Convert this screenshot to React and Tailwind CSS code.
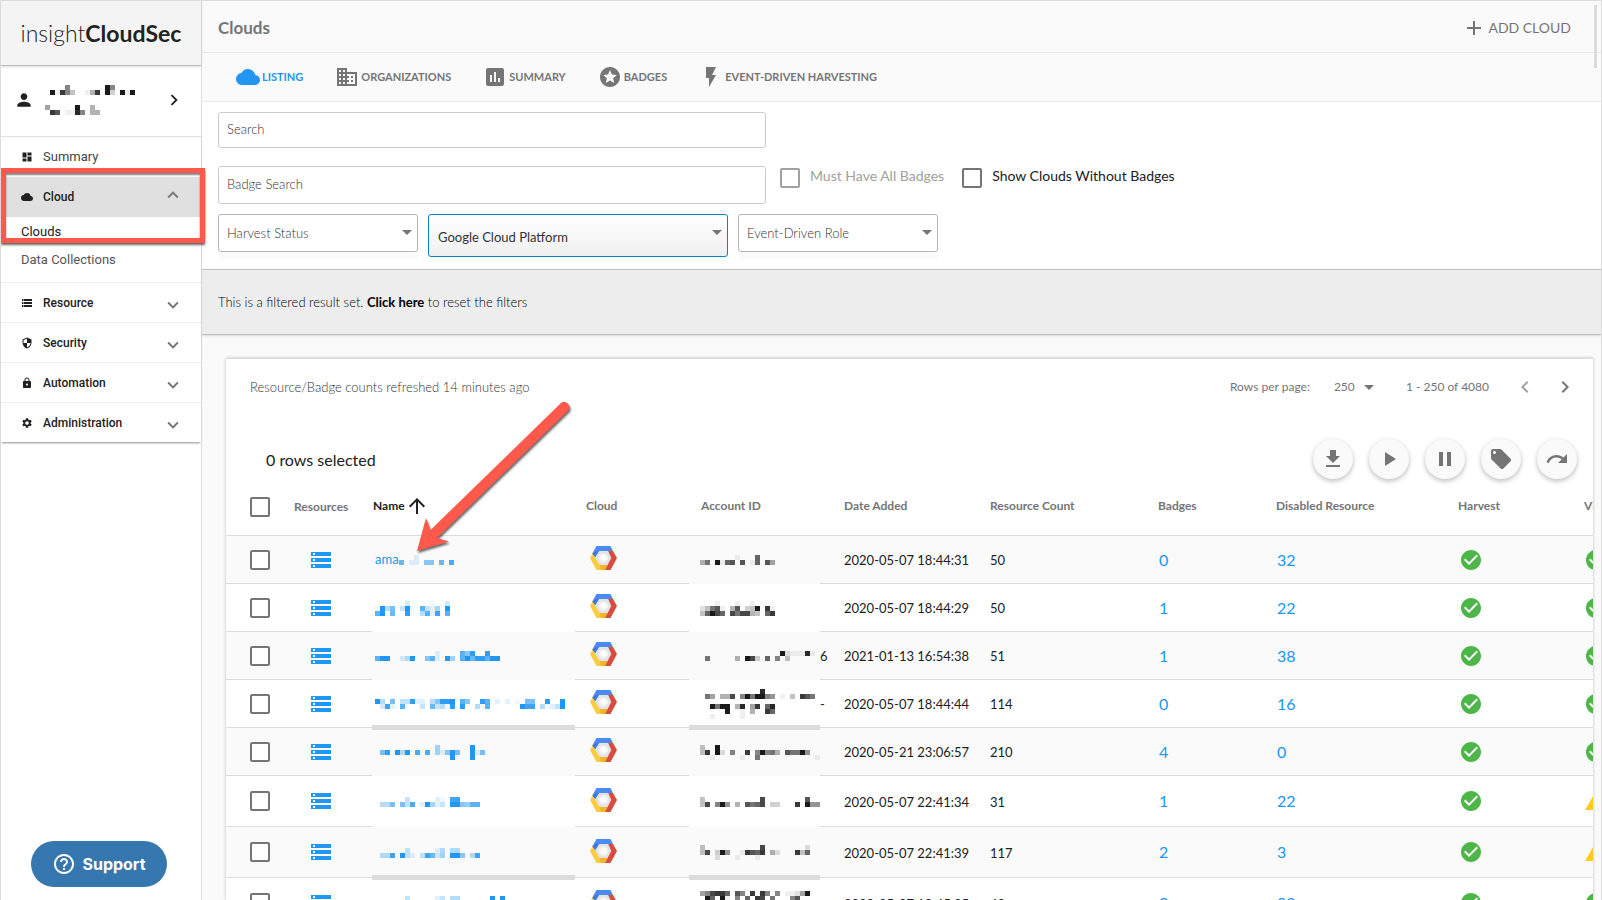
import React from "react";
import {
  MdAdd, MdArrowUpward, MdAssessment, MdBusiness, MdCheckCircle, MdChevronLeft, MdChevronRight,
  MdCloud, MdDashboard, MdFlashOn, MdGetApp, MdHelpOutline, MdKeyboardArrowDown, MdKeyboardArrowUp,
  MdLocalOffer, MdLock, MdPause, MdPerson, MdPlayArrow, MdRedo, MdSecurity, MdSettings, MdStars,
  MdStorage, MdWarning,
} from "react-icons/md";

const CELL = 5;

/* Redacted text: each character of a line is one cell, its hex value the cell's strength. */
function Mosaic({ lines, color }) {
  const cols = Math.max(...lines.map((l) => l.length));
  return (
    <svg
      width={cols * CELL}
      height={lines.length * CELL}
      className="inline-block shrink-0"
      shapeRendering="crispEdges"
      aria-hidden="true"
    >
      {lines.flatMap((line, y) =>
        [...line].map((ch, x) =>
          ch === "." ? null : (
            <rect
              key={x + "-" + y}
              x={x * CELL}
              y={y * CELL}
              width={CELL}
              height={CELL}
              fill={color}
              fillOpacity={parseInt(ch, 16) / 15}
            />
          )
        )
      )}
    </svg>
  );
}

function GcpLogo() {
  return (
    <svg width="27" height="24" viewBox="0 0 27 24" className="block" role="img" aria-label="Google Cloud Platform">
      <path d="M9 4.5h9.500l3.500 7.500-3.500 7.500h-9L5 12z" fill="#e2e2e4" />
      <circle cx="13.500" cy="12" r="5" fill="#f0f0f1" />
      <circle cx="13.500" cy="12" r="3" fill="#fff" />
      <path d="M6.500 0h14L23 5H9L5 11.300 2.300 7.600z" fill="#4a8af4" />
      <path d="M9 5L5 11.300 2.300 7.600 6 5z" fill="#3f78dd" />
      <path d="M2.300 7.600L5 11.300 9.500 19h8L15 24H6.500L0 12z" fill="#fdcb3f" />
      <path d="M9.500 19h8L15 24h-4z" fill="#efb52d" />
      <path d="M18.200 5H23l4 7-6.500 12H15l6.300-12z" fill="#d94b3d" />
    </svg>
  );
}

const ROWS = [
  {
    lead: "ama", name: ["...2", "a.22.88.a.c"],
    account: [".......1...a", "59.f1ab.b.1a.b6"],
    date: "2020-05-07 18:44:31", count: 50, badges: 0, disabled: 32, ok: true, nameLine: true,
  },
  {
    name: ["......3....1..3", "1f59.4f1.b426.f", "bf.a..e1.5b2d.b"],
    account: ["...1...1..1", "249b1.5b.34f.d1", "4afca.c9cc54.ad"],
    date: "2020-05-07 18:44:29", count: 50, badges: 1, disabled: 22, ok: true,
  },
  {
    name: ["............2....b8e..e", "bff..35f..8b2.f6.bfaeebff"],
    account: ["................f2111e1.", ".9.....5.fc3.a.8.4"], tail: "6",
    date: "2021-01-13 16:54:38", count: 51, badges: 1, disabled: 38, ok: true,
  },
  {
    name: ["f5.9.44e22.58eef.b8..eb.2.2.1.99..e..f", ".3d2.b...4.a451e.e..51b......fdd.5124f"],
    account: ["............e", ".96.55c.8f9ff87.1.4.db9.", "", "..f9ff.5e.6d.ae", ".....f..1.5..da", "..1.....1"], tail: "-",
    date: "2020-05-07 18:44:44", count: 114, badges: 0, disabled: 16, ok: true, bar: true,
  },
  {
    name: ["............6......f", ".9e.f5f.c.c.628f9..f29", "...............f...f"],
    account: ["4..f", "4d.f2.8..d.8f895.b99f7", "..1.....1..9...........1"],
    date: "2020-05-21 23:06:57", count: 210, badges: 4, disabled: 0, ok: true,
  },
  {
    name: ["......4.....21.dd", ".559.94c.2f624.ff87bb"],
    account: ["4...........c........b", "4c.8f7.5.b9ac.33...d.f77"],
    date: "2020-05-07 22:41:34", count: 31, badges: 1, disabled: 22, ok: false, tall: true,
  },
  {
    name: ["......4.....25.55", ".55d.f42.4da36.ff8.5d"],
    account: ["4...........c........2", "4c.3f7..1dbad.52...d4a", "...2...1...1"],
    date: "2020-05-07 22:41:39", count: 117, badges: 2, disabled: 3, ok: false, tall: true, bar: true,
  },
  {
    name: ["......4.....24.55......f.f", ".55d.f42.4da36.ff8.5d..f.f", "......1.....1.........."],
    account: ["68cdda.b8.d.d8.8.1126f", ".fa.f1.8.a.dc.9...8b", "4c.8f7.5.b9ac.33", "4c.3f7..1dbad.52", "..1.....1"],
    date: "2020-05-07 18:45:05", count: 40, badges: 0, disabled: 22, ok: true, tall: true,
  },
];

const TABS = [
  { label: "LISTING", icon: MdCloud, active: true },
  { label: "ORGANIZATIONS", icon: MdBusiness },
  { label: "SUMMARY", icon: MdAssessment },
  { label: "BADGES", icon: MdStars },
  { label: "EVENT-DRIVEN HARVESTING", icon: MdFlashOn },
];

const SECTIONS = [
  { label: "Resource", icon: MdStorage },
  { label: "Security", icon: MdSecurity },
  { label: "Automation", icon: MdLock },
  { label: "Administration", icon: MdSettings },
];

const ACTIONS = [
  { label: "Download", icon: MdGetApp },
  { label: "Resume", icon: MdPlayArrow },
  { label: "Pause", icon: MdPause },
  { label: "Tag", icon: MdLocalOffer },
  { label: "Redo", icon: MdRedo },
];

function Check({ label, disabled }) {
  return (
    <input
      type="checkbox"
      aria-label={label}
      disabled={disabled}
      className="block size-5 shrink-0 appearance-none rounded-[2px] border-2 border-[#757575] bg-white disabled:border-[#a0a0a0]"
    />
  );
}

function Caret() {
  return (
    <svg width="10" height="5" viewBox="0 0 10 5" className="pointer-events-none absolute top-4 right-1.5 fill-[#757575]" aria-hidden="true">
      <path d="M0 0h10L5 5z" />
    </svg>
  );
}

function Picker({ label }) {
  return (
    <div className="relative h-[38px] w-[200px]">
      <select
        aria-label={label}
        className="h-full w-full appearance-none rounded-[3px] border border-[#b4b4b4] bg-white pl-2 text-[13px] font-light text-[#333] shadow-[0_7px_0_0_#fafafa]"
      >
        <option>{label}</option>
      </select>
      <Caret />
    </div>
  );
}

function Sidebar() {
  return (
    <aside className="relative w-[201px] shrink-0 border-r border-[#dcdcdc] bg-white font-[Roboto,sans-serif] text-[13px] text-[#212121]">
      <div className="flex h-[65px] items-center justify-center border-b border-[#bdbdbd] bg-[#f4f4f4] font-[Lato,sans-serif] text-[23px] text-[#222] shadow-sm">
        <span className="font-light">insight</span>
        <span className="font-bold">CloudSec</span>
      </div>
      <button type="button" aria-label="Account" className="flex h-[71px] w-full items-center border-b border-[#e0e0e0] pr-4 pb-0.5 pl-[13px]">
        <MdPerson size={20} />
        <span className="flex flex-1 flex-col gap-[10px] pl-[11px]">
          <Mosaic color="#1a1a1a" lines={["....8.......f8", ".f1d84..15d.f3.f1f"]} />
          <Mosaic color="#1a1a1a" lines={["6.....f..5", ".db.11e8.55"]} />
        </span>
        <MdChevronRight size={22} />
      </button>
      <nav className="shadow-[0_2px_2px_-1px_rgba(0,0,0,0.45)]">
        <a href="#summary" className="flex h-10 items-center gap-[10px] pl-5 text-[#444]">
          <MdDashboard size={12} className="text-[#212121]" />
          Summary
        </a>
        <button type="button" className="flex h-10 w-full items-center gap-[10px] bg-[#e0e0e0] pr-[17px] pl-5 text-xs font-medium">
          <MdCloud size={12} />
          <span className="flex-1 text-left">Cloud</span>
          <MdKeyboardArrowUp size={22} className="mb-1 text-[#757575]" />
        </button>
        <div className="flex h-[65px] flex-col gap-2 pt-[5px]">
          <a href="#clouds" className="pl-5 leading-5">Clouds</a>
          <a href="#data" className="pl-5 leading-5 text-[#555]">Data Collections</a>
        </div>
        {SECTIONS.map(({ label, icon: Icon }) => (
          <button key={label} type="button" className="flex h-10 w-full items-center gap-[10px] border-t border-[#f0f0f0] pr-[17px] pl-5 text-xs font-medium">
            <Icon size={12} />
            <span className="flex-1 text-left">{label}</span>
            <MdKeyboardArrowDown size={22} className="mt-[5px] text-[#757575]" />
          </button>
        ))}
      </nav>
      <div className="pointer-events-none absolute top-[167px] left-0 h-[75px] w-[204px] border-[5px] border-[#ff594c] shadow-[0_2px_2px_rgba(0,0,0,0.6),inset_0_2px_2px_rgba(0,0,0,0.5)]" />
    </aside>
  );
}

function Filters() {
  return (
    <section className="bg-white px-4 pt-[10px] pb-3">
      <input
        type="text"
        aria-label="Search"
        placeholder="Search"
        className="block h-9 w-[548px] rounded-[3px] border border-[#ccc] px-2 pb-0.5 text-[13px] font-light placeholder:text-[#333]"
      />
      <div className="mt-[18px] flex items-start">
        <input
          type="text"
          aria-label="Badge Search"
          placeholder="Badge Search"
          className="block h-[38px] w-[548px] rounded-[3px] border border-[#ccc] px-2 pb-0.5 text-[13px] font-light placeholder:text-[#333]"
        />
        <label className="mt-0.5 ml-[14px] flex items-start gap-[10px] text-sm leading-4 text-[#a0a0a0]">
          <Check disabled />
          Must Have All Badges
        </label>
        <label className="mt-0.5 ml-[18px] flex items-start gap-[10px] text-sm leading-4 text-[#212121]">
          <Check />
          Show Clouds Without Badges
        </label>
      </div>
      <div className="mt-[10px] flex items-start gap-[10px]">
        <Picker label="Harvest Status" />
        <div className="relative h-[43px] w-[300px]">
          <select
            aria-label="Cloud type"
            className="h-full w-full appearance-none rounded-[3px] border border-[#0a84c1] bg-linear-to-b from-white to-[#f0f0f0] pt-1 pl-[9px] text-[13px] text-[#333]"
          >
            <option>Google Cloud Platform</option>
          </select>
          <Caret />
        </div>
        <Picker label="Event-Driven Role" />
      </div>
    </section>
  );
}

function CloudTable() {
  const head = "p-0 text-xs font-bold text-[#757575] border-b border-[#dcdcdc] text-left";
  const label = head + " pb-0.5";
  const line = "border-b border-[#dcdcdc]";
  return (
    <table className="w-full min-w-[1414px] table-fixed border-separate border-spacing-0 whitespace-nowrap">
      <colgroup>
        <col className="w-[60px]" />
        <col className="w-[86px]" />
        <col className="w-[203px]" />
        <col className="w-[114px]" />
        <col className="w-[131px]" />
        <col className="w-[146px]" />
        <col className="w-[168px]" />
        <col className="w-[118px]" />
        <col className="w-[182px]" />
        <col className="w-[126px]" />
        <col className="w-[80px]" />
      </colgroup>
      <thead>
        <tr className="h-[57px]">
          <th className={head + " pl-6"}><Check label="Select all rows" /></th>
          <th className={head + " pl-2"}>Resources</th>
          <th className={label + " pl-px"}>
            <button type="button" className="flex items-center font-bold text-[#212121]">
              Name
              <MdArrowUpward size={24} />
            </button>
          </th>
          <th className={label + " pl-[11px]"}>Cloud</th>
          <th className={label + " pl-3"}>Account ID</th>
          <th className={label + " pl-6"}>Date Added</th>
          <th className={label + " pl-6"}>Resource Count</th>
          <th className={label + " pl-6"}>Badges</th>
          <th className={label + " pl-6"}>Disabled Resource</th>
          <th className={label + " pl-6"}>Harvest</th>
          <th className={label + " pl-6"}>Visibility</th>
        </tr>
      </thead>
      <tbody className="text-[13px] text-[#212121]">
        {ROWS.map((r) => (
          <tr key={r.date} className={(r.tall ? "h-[51px]" : "h-12") + " odd:bg-[#fafafa] even:bg-white"}>
            <td className={line + " p-0 pl-6"}><Check label={"Select row " + r.date} /></td>
            <td className={line + " p-0 pr-4"}>
              <a href="#resources" aria-label="Resources" className="flex justify-center text-[#2196f3]"><MdStorage size={24} /></a>
            </td>
            <td className={(r.nameLine ? line : "") + " relative p-0 pl-[3px]"}>
              <a href="#cloud" aria-label="Open cloud" className="flex items-center text-[#2196f3]">
                {r.lead}
                <Mosaic lines={r.name} color="#2196f3" />
              </a>
              {r.bar && <div className="absolute inset-x-0 -bottom-0.5 z-10 h-[5px] bg-[#dcdcdc]" />}
            </td>
            <td className={line + " p-0 pb-[3px] pl-[15px]"}><GcpLogo /></td>
            <td className="relative p-0 pl-[11px]">
              <div className="flex items-center">
                <Mosaic lines={r.account} color="#1a1a1a" />
                {r.tail}
              </div>
              {r.bar && <div className="absolute inset-x-0 -bottom-0.5 z-10 h-[5px] bg-[#dcdcdc]" />}
            </td>
            <td className={line + " p-0 pt-0.5 pl-6"}>{r.date}</td>
            <td className={line + " p-0 pt-0.5 pl-6"}>{r.count}</td>
            <td className={line + " p-0 pl-[25px] text-base"}><a href="#badges" className="text-[#2196f3]">{r.badges}</a></td>
            <td className={line + " p-0 pl-[25px] text-base"}><a href="#disabled" className="text-[#2196f3]">{r.disabled}</a></td>
            <td className={line + " p-0 pl-[25px]"}><MdCheckCircle size={24} className="text-[#4cb748]" /></td>
            <td className={line + " p-0 pl-6"}>
              {r.ok ? <MdCheckCircle size={24} className="text-[#4cb748]" /> : <MdWarning size={24} className="text-[#ffcb1f]" />}
            </td>
          </tr>
        ))}
      </tbody>
    </table>
  );
}

export default function App() {
  return (
    <div className="relative flex h-screen overflow-hidden border-t border-r border-l border-[#dcdcdc] bg-white font-[Lato,sans-serif] text-sm text-[#212121]">
      <Sidebar />
      <main className="flex min-w-0 flex-1 flex-col bg-[#fafafa]">
        <header className="mt-[3px] flex h-[49px] shrink-0 items-center justify-between border-b border-[#e8e8e8] px-4 pr-[30px] text-[#757575]">
          <h1 className="text-[17px] font-bold">Clouds</h1>
          <button type="button" className="flex items-center gap-0.5 text-sm">
            <MdAdd size={24} />
            ADD CLOUD
          </button>
        </header>
        <nav className="flex h-[49px] shrink-0 items-center gap-8 border-b border-[#e8e8e8] pl-[34px] text-[11px] font-bold text-[#757575]">
          {TABS.map(({ label, icon: Icon, active }) => (
            <a key={label} href="#tab" className={"flex items-center gap-0.5 " + (active ? "text-[#2196f3]" : "")}>
              <Icon size={24} />
              {label}
            </a>
          ))}
        </nav>
        <Filters />
        <div className="flex h-[66px] shrink-0 items-center border-y border-[#bfbfbf] bg-[#ededed] px-4 text-[13px] font-light text-black shadow-sm">
          <p>
            This is a filtered result set. <a href="#reset" className="font-bold">Click here</a> to reset the filters
          </p>
        </div>
        <section className="mt-[23px] mr-2 ml-6 min-h-0 flex-1 overflow-hidden border-t border-[#dcdcdc] bg-white shadow-[0_0_3px_rgba(0,0,0,0.25)]">
          <div className="flex h-14 items-center justify-between pr-4 pl-6">
            <p className="text-[13px] font-light text-[#333]">Resource/Badge counts refreshed 14 minutes ago</p>
            <div className="flex items-center text-xs text-[#757575]">
              <span className="mr-6">Rows per page:</span>
              <div className="relative mr-8">
                <select aria-label="Rows per page" className="w-10 appearance-none">
                  <option>250</option>
                </select>
                <svg width="10" height="5" viewBox="0 0 10 5" className="pointer-events-none absolute top-1.5 right-0 fill-[#757575]" aria-hidden="true">
                  <path d="M0 0h10L5 5z" />
                </svg>
              </div>
              <span className="mr-6">1 - 250 of 4080</span>
              <button type="button" aria-label="Previous page" className="mr-4 text-[#a0a0a0]"><MdChevronLeft size={24} /></button>
              <button type="button" aria-label="Next page"><MdChevronRight size={24} /></button>
            </div>
          </div>
          <div className="flex h-16 items-end justify-between pr-4 pl-10">
            <p className="h-10 text-base leading-[42px]">0 rows selected</p>
            <div className="flex gap-4">
              {ACTIONS.map(({ label, icon: Icon }) => (
                <button key={label} type="button" aria-label={label} className="flex size-10 items-center justify-center rounded-full bg-[#fafafa] text-[#757575] shadow-[0_2px_5px_rgba(0,0,0,0.26)]">
                  <Icon size={24} />
                </button>
              ))}
            </div>
          </div>
          <CloudTable />
        </section>
      </main>
      <div className="absolute top-1 right-1 h-[63px] w-[3px] bg-[#dcdcdc]" />
      <svg className="pointer-events-none absolute top-[390px] left-[400px] z-20" width="190" height="180" viewBox="401 391 190 180" aria-hidden="true">
        <path
          d="M417 551L426 518 430.500 530 561 403A5.500 5.500 0 0 1 569 410L437 538 449 541.500Z"
          fill="#ff594c"
          style={{ filter: "drop-shadow(1px 2px 1px rgba(0,0,0,.6))" }}
        />
      </svg>
      <button type="button" className="absolute bottom-[13px] left-[30px] z-20 flex h-[46px] w-[136px] items-center justify-center gap-1.5 rounded-full bg-[#3777b0] font-[Inter,sans-serif] text-base font-bold text-white">
        <MdHelpOutline size={24} />
        Support
      </button>
    </div>
  );
}
